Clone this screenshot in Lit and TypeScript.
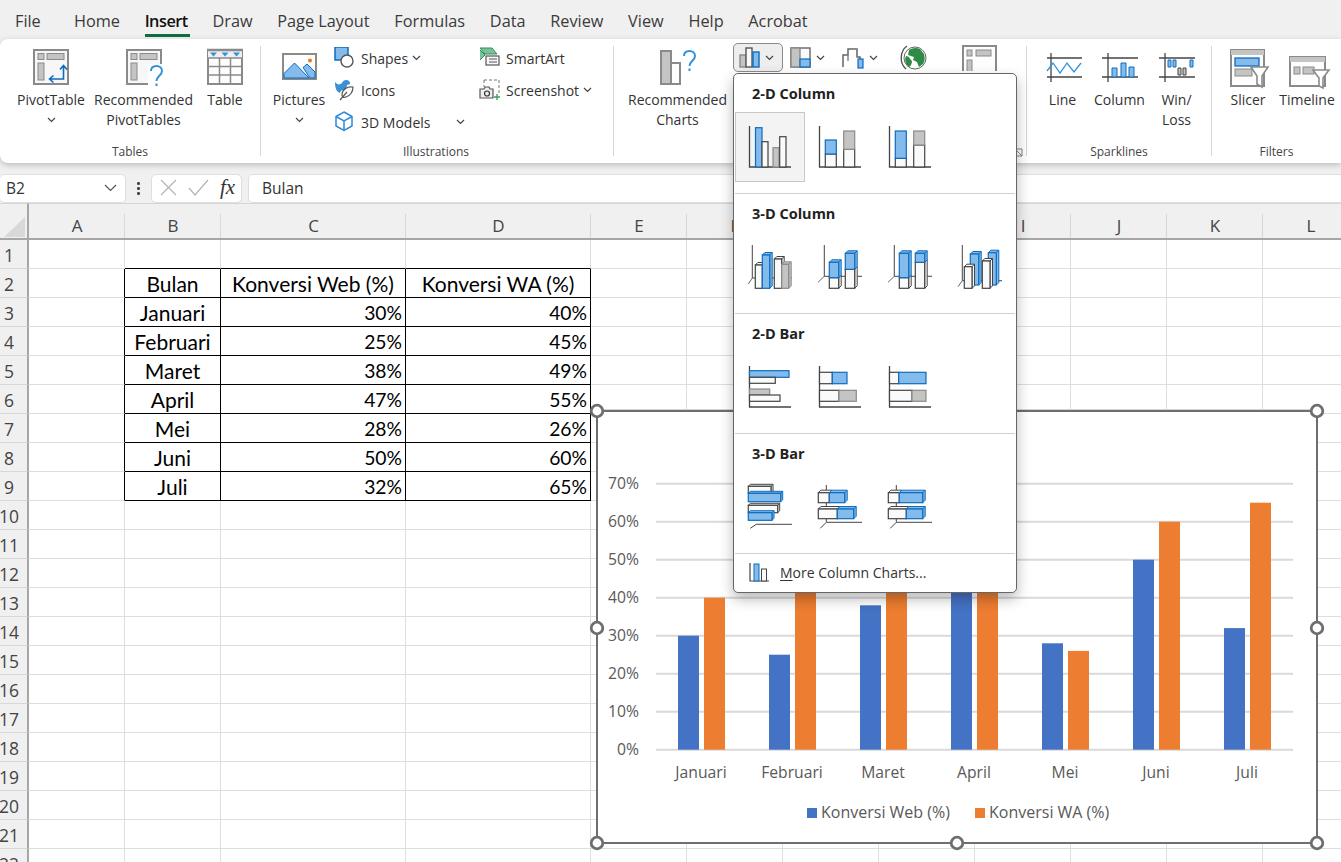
import { LitElement, html, css, svg } from 'lit';
import { customElement } from 'lit/decorators.js';

const BLUE = '#83bbec';
const BLUE_LINE = '#0f6cbd';
const GRAY = '#c4c4c2';
const GRAY_LINE = '#8a8a8a';
const DARK = '#444444';
const PAPER = '#fafafa';

type Kind = 'b' | 'g' | 'w';
const fillOf = { b: BLUE, g: GRAY, w: PAPER };
const lineOf = { b: BLUE_LINE, g: GRAY_LINE, w: DARK };

// flat bar given by its corners
const box = (x0: number, y0: number, x1: number, y1: number, k: Kind) =>
  svg`<rect x=${x0} y=${y0} width=${x1 - x0} height=${y1 - y0} fill=${fillOf[k]} stroke=${lineOf[k]} stroke-width="1.2"/>`;

// same bar, with a top and a side face
const cube = (x0: number, y0: number, x1: number, y1: number, k: Kind, d = 2.5) => svg`
  <path d="M${x0} ${y0}l${d} ${-d}H${x1 + d}V${y1 - d}L${x1} ${y1}V${y0}Z" fill=${fillOf[k]} stroke=${lineOf[k]} stroke-width="1"/>
  <path d="M${x1} ${y0}l${d} ${-d}" stroke=${lineOf[k]} stroke-width="1" fill="none"/>
  ${box(x0, y0, x1, y1, k)}`;

const axes2 = svg`<path d="M14.5 14V55H56" fill="none" stroke=${DARK} stroke-width="1.3"/>`;
const axes3 = (vx: number, fy: number, dx: number) => svg`
  <path d="M${vx} 13V${fy}H57" fill="none" stroke=${DARK} stroke-width="1"/>
  <path d="M${vx} ${fy}L${dx} ${fy + 6}" fill="none" stroke="#666" stroke-width="1"/>`;
const floorH = (fy: number) => svg`
  <path d="M21.3 ${fy}H57M21.3 ${fy}L15.3 56.3" fill="none" stroke=${DARK} stroke-width="1"/>`;

const SECTIONS = [
  {
    title: '2-D Column',
    tiles: [
      svg`${axes2}${box(20.5, 15.7, 27, 55, 'b')}${box(27, 29.7, 33, 55, 'w')}${box(38, 35.7, 44, 55, 'g')}${box(44.7, 24.7, 51, 55, 'w')}`,
      svg`${axes2}${box(20.3, 42, 31.3, 55, 'w')}${box(20.3, 28, 31.3, 42, 'b')}${box(38.7, 37.3, 49.7, 55, 'w')}${box(38.7, 19, 49.7, 37.3, 'g')}`,
      svg`${axes2}${box(20.3, 46.3, 31.3, 55, 'w')}${box(20.3, 19, 31.3, 46.3, 'b')}${box(38.7, 33, 49.7, 55, 'w')}${box(38.7, 19, 49.7, 33, 'g')}`,
    ],
  },
  {
    title: '3-D Column',
    tiles: [
      svg`${axes3(17.3, 46, 13.3)}${cube(20.3, 33, 27.3, 56.3, 'w')}${cube(27.3, 23, 34.7, 56.3, 'b')}${cube(39.3, 27, 46.7, 56.3, 'w')}${cube(46.7, 32.3, 53.7, 56.3, 'g')}`,
      svg`${axes3(19.3, 44.3, 13)}${cube(24.3, 45.7, 33.7, 56.3, 'w')}${cube(24.3, 30.3, 33.7, 45.7, 'b')}${cube(40.3, 37.3, 49.7, 56.3, 'w')}${cube(40.3, 21.3, 49.7, 37.3, 'b')}`,
      svg`${axes3(19.3, 44.3, 13)}${cube(24.3, 45.7, 33.7, 56.3, 'w')}${cube(24.3, 21.3, 33.7, 45.7, 'b')}${cube(40.3, 30.3, 49.7, 56.3, 'w')}${cube(40.3, 21.3, 49.7, 30.3, 'b')}`,
      svg`${axes3(17.3, 48.7, 13)}${cube(25.3, 22, 33.7, 53, 'b')}${cube(43.3, 20.7, 51.3, 53, 'b')}${cube(19.3, 34.7, 27, 56.3, 'w')}${cube(37.3, 29, 45, 56.3, 'w')}`,
    ],
  },
  {
    title: '2-D Bar',
    tiles: [
      svg`${axes2}${box(14.5, 18.7, 54, 25.3, 'b')}${box(14.5, 25.3, 40.3, 31.3, 'w')}${box(14.5, 37, 34.7, 43, 'g')}${box(14.5, 43, 45, 49.3, 'w')}`,
      svg`${axes2}${box(14.5, 20.3, 27.3, 31.7, 'w')}${box(27.3, 20.3, 42, 31.7, 'b')}${box(14.5, 38.3, 34, 49.3, 'w')}${box(34, 38.3, 51.3, 49.3, 'g')}`,
      svg`${axes2}${box(14.5, 20.3, 23.7, 31.7, 'w')}${box(23.7, 20.3, 51, 31.7, 'b')}${box(14.5, 38.3, 37, 49.3, 'w')}${box(37, 38.3, 51, 49.3, 'g')}`,
    ],
  },
  {
    title: '3-D Bar',
    tiles: [
      svg`${floorH(52.3)}${cube(13.3, 14.3, 36, 21.3, 'w', 2)}${cube(13.3, 21.3, 45.7, 29.7, 'b', 2)}${cube(13.3, 33.3, 42.7, 40.7, 'w', 2)}${cube(13.3, 40.7, 37, 48.3, 'b', 2)}`,
      svg`${floorH(50.3)}<path d="M21.3 13V18M21.3 31V35M21.3 47V50" stroke=${DARK} stroke-width="1"/>${cube(13.3, 20.7, 24.3, 30.7, 'w')}${cube(24.3, 20.7, 39.7, 30.7, 'b')}${cube(13.3, 37, 32.3, 46.7, 'w')}${cube(32.3, 37, 48.7, 46.7, 'b')}`,
      svg`${floorH(50.3)}<path d="M21.3 13V18M21.3 31V35M21.3 47V50" stroke=${DARK} stroke-width="1"/>${cube(13.3, 20.7, 24.3, 30.7, 'w')}${cube(24.3, 20.7, 47.7, 30.7, 'b')}${cube(13.3, 37, 31.3, 46.7, 'w')}${cube(31.3, 37, 47.7, 46.7, 'b')}`,
    ],
  },
];

const pivotBase = svg`
  <rect x="7" y="4" width="34" height="34" fill="#f7f7f7" stroke=${GRAY_LINE} stroke-width="2"/>
  <rect x="11" y="7.5" width="6" height="6" fill=${GRAY} stroke=${GRAY_LINE}/>
  <rect x="20" y="7.5" width="17" height="6" fill=${GRAY} stroke=${GRAY_LINE}/>
  <rect x="11" y="17" width="6" height="17" fill=${GRAY} stroke=${GRAY_LINE}/>`;

const question = (x: number, y: number) => svg`
  <g transform="translate(${x} ${y})" fill="none" stroke="#2f93dc" stroke-width="2">
    <path d="M1 6C1 2.5 3.5 1 6.500 1S12 3 12 6c0 4.500-5.500 5-5.500 10"/>
    <path d="M6.500 18.500v2.500"/>
  </g>`;

const ICONS = {
  pivot: svg`${pivotBase}
    <path d="M23 33H36.500V20M33 23.500l3.500-4 3.500 4M26.500 29.500l-4 3.500 4 3.500" fill="none" stroke=${BLUE_LINE} stroke-width="1.600"/>`,
  recPivot: svg`${pivotBase}<rect x="28" y="18" width="16" height="23" fill="#fff"/>${question(30, 19)}`,
  table: svg`
    <rect x="7" y="4" width="34" height="34" fill="#fdfdfd" stroke=${GRAY_LINE} stroke-width="2"/>
    <rect x="7" y="4" width="34" height="8" fill="#efefef"/>
    <path d="M6 4H42" stroke=${GRAY_LINE} stroke-width="2.500"/>
    <path d="M7 12H41M7 20.500H41M7 29H41M18.500 12V38M29.500 12V38" stroke=${GRAY_LINE} stroke-width="1.500"/>
    <path d="M9 6.500h7l-3.500 4zM20.500 6.500h7l-3.500 4zM32 6.500h7l-3.500 4z" fill="#2f93dc"/>`,
  pictures: svg`
    <rect x="8" y="8" width="33" height="25" fill="#fdfdfd" stroke=${GRAY_LINE} stroke-width="2"/>
    <path d="M9 27.500L19.500 17 34 32H9z" fill=${BLUE} stroke=${BLUE_LINE} stroke-width="1"/>
    <path d="M28 21.500l4-3.500 8 8v6h-5z" fill=${BLUE} stroke=${BLUE_LINE} stroke-width="1"/>
    <circle cx="35" cy="14.500" r="2" fill="#e8791f"/>`,
  recChart: svg`
    <rect x="7" y="5" width="10" height="33" fill=${GRAY} stroke=${GRAY_LINE} stroke-width="2"/>
    <rect x="17" y="17" width="9" height="21" fill="#fdfdfd" stroke=${GRAY_LINE} stroke-width="2"/>
    ${question(29, 4)}`,
  sparkLine: svg`
    <path d="M8 12H43M8 31H43M12 7V36" fill="none" stroke=${DARK} stroke-width="1.300"/>
    <path d="M8 25l6-8 7 10 7-10 7 9 7-9" fill="none" stroke="#2f93dc" stroke-width="1.300"/>`,
  sparkCol: svg`
    <path d="M6 12H42M6 31H42M12 7V36" fill="none" stroke=${DARK} stroke-width="1.300"/>
    <path d="M16 22h5v9h-5zM25 17h5v14h-5zM33 21h5v10h-5z" fill=${BLUE} stroke=${BLUE_LINE}/>`,
  sparkWin: svg`
    <path d="M6 12H42M6 31H42M12 7V36" fill="none" stroke=${DARK} stroke-width="1.300"/>
    <path d="M15 14h3v7h-3zM20 14h3v7h-3zM37 14h3v7h-3z" fill=${BLUE} stroke=${BLUE_LINE}/>
    <path d="M25 22h3v7h-3zM30 22h3v7h-3z" fill=${GRAY} stroke=${DARK}/>`,
  slicer: svg`
    <rect x="7" y="4" width="33" height="36" fill="#fdfdfd" stroke=${GRAY_LINE} stroke-width="2"/>
    <rect x="7" y="4" width="33" height="5" fill=${GRAY}/>
    <rect x="11" y="12" width="24" height="8" fill=${BLUE} stroke=${BLUE_LINE} stroke-width="1.300"/>
    <rect x="11" y="23" width="17" height="7" fill=${GRAY} stroke=${GRAY_LINE}/>
    <path d="M27 21H44L38 30V41L33 38V30z" fill="#fff" stroke=${GRAY_LINE} stroke-width="1.600"/>`,
  timeline: svg`
    <rect x="7" y="11" width="35" height="29" fill="#fdfdfd" stroke=${GRAY_LINE} stroke-width="2"/>
    <rect x="7" y="11" width="35" height="5" fill=${GRAY}/>
    <rect x="11" y="21" width="6" height="7" fill=${GRAY} stroke=${GRAY_LINE}/>
    <rect x="20" y="21" width="11" height="7" fill=${GRAY} stroke=${GRAY_LINE}/>
    <path d="M30 24H46L40 32V42L36 40V32z" fill="#fff" stroke=${GRAY_LINE} stroke-width="1.600"/>`,
};

const chev = (w = 9) => html`<svg class="chev" width=${w} height="6" viewBox="0 0 9 6"><path d="M1 1l3.500 3.500L8 1" fill="none" stroke="#444" stroke-width="1.200"/></svg>`;

const SMALL = {
  shapes: svg`
    <rect x="1" y="0" width="13" height="13" fill=${BLUE} stroke=${BLUE_LINE} stroke-width="1.500"/>
    <circle cx="13" cy="14" r="6" fill="#fff" stroke="#555" stroke-width="1.400"/>`,
  icons: svg`
    <path d="M1 3c2 3 5 3 7 1 1-3 5-4 7-2 1 1 1 2 1 3l-3 1c0 3-2 5-5 5-1 1-2 2-2 3-3-1-5-4-5-11z" fill="#3a8fd6"/>
    <path d="M19 8c-5-1-11 2-11 8 0 2 2 3 4 2 4-1 7-5 7-10zM6 21l7-8" fill="#fff" stroke="#555" stroke-width="1.200"/>`,
  models: svg`
    <path d="M10 1l8 4.500v9.500l-8 4.500-8-4.500V5.500zM2 5.500l8 4.500 8-4.500M10 10v9.500" fill="none" stroke="#2f8bd8" stroke-width="1.500"/>`,
  smartart: svg`
    <path d="M1 1h12l5 6H6zM1 13l5-5-5-5" fill="#79c29a" stroke="#2f8f5b"/>
    <rect x="7" y="9" width="13" height="9" fill="#f8f8f8" stroke="#555" stroke-width="1.200"/>
    <path d="M10 12h8M10 15h8" stroke="#555"/>`,
  screenshot: svg`
    <path d="M5 1h15v15" fill="none" stroke="#777" stroke-dasharray="3 2"/>
    <path d="M5 1v7" fill="none" stroke="#777" stroke-dasharray="3 2"/>
    <path d="M1 10h4l1-2h4l1 2h3v9H1z" fill="#eee" stroke="#555" stroke-width="1.200"/>
    <circle cx="8" cy="14.500" r="2.500" fill="none" stroke="#333" stroke-width="1.200"/>
    <path d="M18 15v6M15 18h6" stroke="#3aa35f" stroke-width="1.400"/>`,
  column: svg`
    <rect x="2" y="8" width="6" height="12" fill=${GRAY} stroke=${GRAY_LINE} stroke-width="1.400"/>
    <rect x="8" y="1" width="6" height="19" fill="#fafafa" stroke="#555" stroke-width="1.400"/>
    <rect x="15" y="5" width="6" height="15" fill=${BLUE} stroke=${BLUE_LINE} stroke-width="1.400"/>`,
  hierarchy: svg`
    <rect x="1" y="1" width="19" height="19" fill="#fafafa" stroke="#666" stroke-width="1.400"/>
    <rect x="1" y="1" width="9" height="19" fill=${GRAY} stroke=${GRAY_LINE} stroke-width="1.400"/>
    <rect x="10" y="12" width="10" height="8" fill=${BLUE} stroke=${BLUE_LINE} stroke-width="1.200"/>`,
  waterfall: svg`
    <path d="M1 20V8h5V2h9v8h3v10" fill="none" stroke="#666" stroke-width="1.500"/>
    <path d="M6 8v6M15 2v8" fill="none" stroke="#888" stroke-width="1.500"/>
    <rect x="16" y="12" width="5" height="9" fill=${BLUE} stroke=${BLUE_LINE} stroke-width="1.200"/>`,
  globe: svg`
    <circle cx="15" cy="14" r="11" fill="#fff" stroke="#666" stroke-width="1"/>
    <path d="M9 6c3-2 7-3 11-1l4 5c1 4 1 7-1 10l-4 3-2-5-4-2 1-3-6-2z" fill="#2e8b45"/>
    <path d="M6 12c3 0 4 3 6 5 0 2-1 5-3 6-3-2-5-7-3-11z" fill="#2e8b45"/>
    <path d="M7 2C0 7-1 19 6 25" fill="none" stroke="#555" stroke-width="1.400"/>`,
  pivotChart: svg`
    <rect x="1" y="1" width="33" height="30" fill="#fdfdfd" stroke=${GRAY_LINE} stroke-width="2"/>
    <rect x="5" y="5" width="5" height="6" fill=${GRAY} stroke=${GRAY_LINE}/>
    <rect x="14" y="5" width="15" height="6" fill=${GRAY} stroke=${GRAY_LINE}/>
    <rect x="5" y="15" width="5" height="16" fill=${GRAY} stroke=${GRAY_LINE}/>`,
};

const COLUMNS = ['A', 'B', 'C', 'D', 'E', 'F', 'G', 'H', 'I', 'J', 'K', 'L'];
const TABLE = [
  ['Bulan', 'Konversi Web (%)', 'Konversi WA (%)'],
  ['Januari', '30%', '40%'],
  ['Februari', '25%', '45%'],
  ['Maret', '38%', '49%'],
  ['April', '47%', '55%'],
  ['Mei', '28%', '26%'],
  ['Juni', '50%', '60%'],
  ['Juli', '32%', '65%'],
];

const TABS = ['File', 'Home', 'Insert', 'Draw', 'Page Layout', 'Formulas', 'Data', 'Review', 'View', 'Help', 'Acrobat'];

@customElement('sheet-chart')
export class SheetChart extends LitElement {
  static styles = css`
    :host { display: block; position: absolute; left: 597px; top: 208px; width: 720px; height: 432px; }
    svg { display: block; overflow: visible; font-family: "Open Sans", sans-serif; font-size: 15.7px; fill: #595959; }
    .grid { stroke: #d9d9d9; stroke-width: 2; }
    .legend { font-size: 16px; }
  `;

  render() {
    const x0 = 59, base = 338.7, step = 38, cat = 91;
    const rows = TABLE.slice(1);
    const handles = [[0, 0], [360, 0], [720, 0], [0, 217], [720, 217], [0, 432], [360, 432], [720, 432]];
    return html`<svg width="720" height="432" viewBox="0 0 720 432">
      <rect x="-1" y="-2" width="722" height="2" fill="#d4d4d4"/>
      <rect width="720" height="432" fill="#fff" stroke="#6e6e6e" stroke-width="2"/>
      ${[0, 1, 2, 3, 4, 5, 6, 7].map((i) => svg`
        <line class="grid" x1=${x0} x2="696" y1=${base - i * step} y2=${base - i * step}/>
        <text x="42" y=${base - i * step + 5} text-anchor="end">${i * 10}%</text>`)}
      ${rows.map((r, i) => {
        const web = parseInt(r[1]) * 3.8, wa = parseInt(r[2]) * 3.8;
        return svg`
          <rect x=${81 + i * cat} y=${base - web} width="21" height=${web} fill="#4472c4"/>
          <rect x=${107 + i * cat} y=${base - wa} width="21" height=${wa} fill="#ed7d31"/>
          <text x=${104 + i * cat} y="367" text-anchor="middle">${r[0]}</text>`;
      })}
      <rect x="210" y="397" width="10" height="10" fill="#4472c4"/>
      <text class="legend" x="224" y="407">Konversi Web (%)</text>
      <rect x="378" y="397" width="10" height="10" fill="#ed7d31"/>
      <text class="legend" x="392" y="407">Konversi WA (%)</text>
      ${handles.map(([x, y]) => svg`<circle cx=${x} cy=${y} r="5.800" fill="#fff" stroke="#6e6e6e" stroke-width="2.800"/>`)}
    </svg>`;
  }
}

@customElement('chart-menu')
export class ChartMenu extends LitElement {
  static styles = css`
    :host {
      display: block; position: absolute; left: 733px; top: 73px; width: 284px; height: 520px; box-sizing: border-box;
      background: #fff; border: 1px solid #666; border-radius: 5px;
      box-shadow: 0 6px 14px rgba(0, 0, 0, .28);
      font-family: "Open Sans", sans-serif; color: #222;
    }
    section { height: 120px; box-sizing: border-box; border-bottom: 1px solid #d0d0d0; margin: 0 1px; }
    h3 { margin: 0; height: 38px; padding: 11px 0 0 17px; box-sizing: border-box; font-size: 14.500px; line-height: 18px; font-weight: 700; color: #222; }
    .tiles { display: flex; }
    .tile { width: 70px; height: 70px; box-sizing: border-box; }
    .tile svg { display: block; }
    .tile.on { background: #f3f3f3; outline: 1px solid #c8c8c8; outline-offset: -1px; }
    .more { display: flex; align-items: center; height: 36px; padding-left: 15px; font-size: 14px; gap: 11px; color: #333; }
    .more u { text-underline-offset: 2px; }
  `;

  render() {
    return html`
      ${SECTIONS.map((s, si) => html`<section>
        <h3>${s.title}</h3>
        <div class="tiles">
          ${s.tiles.map((t, ti) => html`<div class=${si === 0 && ti === 0 ? 'tile on' : 'tile'}>
            <svg width="70" height="70" viewBox="0 0 70 70">${t}</svg>
          </div>`)}
        </div>
      </section>`)}
      <div class="more">
        <svg width="20" height="20" viewBox="0 0 20 20">
          <path d="M1 1V19H20" fill="none" stroke=${DARK} stroke-width="1.200"/>
          <rect x="5" y="2" width="5" height="17" fill=${BLUE} stroke=${BLUE_LINE}/>
          <rect x="12.500" y="7" width="5" height="12" fill=${PAPER} stroke=${DARK}/>
        </svg>
        <span><u>M</u>ore Column Charts...</span>
      </div>
    `;
  }
}

@customElement('app-root')
export class AppRoot extends LitElement {
  static styles = css`
    :host {
      display: block; position: relative; width: 1341px; height: 862px; overflow: hidden;
      background: #f0f0f0; font-family: "Open Sans", sans-serif; color: #333;
    }
    .tabs { display: flex; height: 39px; gap: 24.700px; padding-left: 15px; font-size: 16.300px; line-height: 42px; color: #3a3a3a; }
    .tabs span:first-child { margin-right: 8.500px; }
    .tabs .on { position: relative; color: #111; font-weight: 600; letter-spacing: -.5px; }
    .tabs .on::after { content: ""; position: absolute; left: 0; right: -2px; top: 34px; height: 2.500px; background: #0f6c3f; }

    .ribbon {
      display: flex; height: 124px; box-sizing: border-box; padding: 7px 0; background: #fff;
      border-radius: 8px 0 0 8px; box-shadow: 0 2px 6px rgba(0, 0, 0, .22); font-size: 14px;
    }
    .group { display: flex; flex-direction: column; box-sizing: border-box; border-right: 1px solid #d6d6d6; }
    .g-tables { width: 261px; }
    .g-illus { width: 353px; }
    .g-charts { width: 413px; }
    .g-spark { width: 185px; }
    .g-filters { width: 129px; border-right: 0; }
    .items { flex: 1; display: flex; }
    .caption { text-align: center; font-size: 12px; line-height: 16px; height: 16px; margin-top: 2px; margin-bottom: -4px; color: #444; }
    .g-illus .caption { padding-right: 2px; }
    .g-tables .items { padding-left: 9px; }
    .g-illus .items { padding-left: 10px; }
    .g-charts .items { padding-left: 13px; }
    .g-spark .items { padding-left: 7px; }
    .g-filters .items { padding-left: 8px; }

    .big { display: flex; flex-direction: column; align-items: center; text-align: center; line-height: 20px; white-space: nowrap; }
    .big svg.icon { display: block; margin-bottom: 0; flex: none; }
    .big .chev { margin-top: 7px; }
    .w56 { width: 56px; } .w57 { width: 57px; } .w62 { width: 62px; }
    .w84 { width: 84px; } .w101 { width: 101px; }

    .stack { display: flex; flex-direction: column; gap: 6px; margin-top: -1px; }
    .s1 { margin-left: 7px; width: 145px; }
    .s2 { width: 120px; }
    .row { display: flex; align-items: center; height: 26px; gap: 6px; white-space: nowrap; }
    .row svg { flex: none; }
    .row .more { margin-left: -2px; display: flex; }
    .row .push { margin-left: 20px; }

    .minis { display: flex; align-items: flex-start; margin-left: 5px; margin-top: -3px; height: 30px; }
    .mini { display: flex; align-items: center; gap: 5px; height: 29px; box-sizing: border-box; }
    .mini.on { width: 50px; padding-left: 4px; background: #eeeeee; border: 1px solid #8a8a8a; border-radius: 5px; margin-right: 7px; }
    .mini.two { width: 52px; }
    .mini.three { width: 58px; }
    .mini.globe { width: 62px; }

    .launcher { position: absolute; left: 1017px; top: 148px; }

    .formula { display: flex; height: 29px; margin-top: 11px; font-size: 15.500px; color: #333; }
    .fbox { background: #fff; border: 1px solid #dedede; border-radius: 5px; box-sizing: border-box; display: flex; align-items: center; padding-bottom: 2px; }
    .name { width: 126px; justify-content: space-between; padding: 0 8px 2px 6px; border-left: 0; }
    .dots { width: 25px; display: flex; flex-direction: column; align-items: center; justify-content: center; gap: 2.500px; }
    .dots i { width: 2.500px; height: 2.500px; background: #444; border-radius: 50%; }
    .fx { width: 91px; gap: 11px; padding-left: 8px; margin-right: 6px; }
    .fx em { font: italic 400 21px "Liberation Serif", serif; color: #333; }
    .value { flex: 1; padding-left: 13px; margin-right: -10px; }

    .sheet {
      display: grid; grid-template-columns: 29px 96px 96px 185px 185px repeat(8, 96px);
      grid-template-rows: 37px repeat(22, 29px); height: 659px; overflow: hidden; position: relative;
    }
    .cell { border-right: 1px solid #dedede; border-bottom: 1px solid #dedede; background: #fff; box-sizing: border-box;
      font-family: Lato, sans-serif; font-size: 21px; line-height: 29px; color: #000; white-space: nowrap; padding: 0 3px; }
    .center { text-align: center; }
    .right { text-align: right; font-size: 19.300px; }
    .inkR { border-right-color: #000; }
    .inkB { border-bottom-color: #000; }
    .corner, .colhead { background: #f0f0f0; border-bottom: 2px solid #a6a6a6; border-top: 1px solid #d6d6d6; box-sizing: border-box; }
    .corner { border-right: 2px solid #a6a6a6; }
    .corner svg { display: block; }
    .colhead { position: relative; text-align: center; font-size: 17px; line-height: 24px; padding-top: 10px; color: #444; }
    .colhead::after { content: ""; position: absolute; right: 0; top: 10px; bottom: 0; width: 1px; background: #d8d8d8; }
    .rowhead { background: #f0f0f0; border-right: 2px solid #a6a6a6; border-bottom: 1px solid #d8d8d8; box-sizing: border-box; display: flex;
      justify-content: center; width: 29px; padding-right: 9px; font-size: 17.500px; line-height: 31px; color: #444; }
  `;

  private big(icon: unknown, width: string, lines: string[], more = false) {
    return html`<div class="big ${width}">
      <svg class="icon" width="48" height="44" viewBox="0 0 48 44">${icon}</svg>
      ${lines.map((l) => html`<span>${l}</span>`)}
      ${more ? chev() : ''}
    </div>`;
  }

  private small(icon: unknown, label: string, more = false, push = false) {
    return html`<div class="row">
      <svg width="21" height="22" viewBox="0 0 21 22">${icon}</svg>
      <span>${label}</span>
      ${more ? html`<span class="more ${push ? 'push' : ''}">${chev()}</span>` : ''}
    </div>`;
  }

  private ink(r: number, c: number) {
    const inRow = r >= 2 && r <= 9, inCol = c >= 1 && c <= 3;
    const right = inRow && (inCol || c === 0);
    const bottom = inCol && (inRow || r === 1);
    return `${right ? 'inkR' : ''} ${bottom ? 'inkB' : ''}`;
  }

  private cell(r: number, c: number) {
    const row = r >= 2 && r <= 9 && c >= 1 && c <= 3 ? TABLE[r - 2] : null;
    const text = row ? row[c - 1] : '';
    const align = c === 1 || r === 2 ? 'center' : 'right';
    return html`<div class="cell ${align} ${this.ink(r, c)}">${text}</div>`;
  }

  render() {
    const rows = Array.from({ length: 22 }, (_, i) => i + 1);
    return html`
      <nav class="tabs">
        ${TABS.map((t) => html`<span class=${t === 'Insert' ? 'on' : ''}>${t}</span>`)}
      </nav>

      <div class="ribbon">
        <div class="group g-tables">
          <div class="items">
            ${this.big(ICONS.pivot, 'w84', ['PivotTable'], true)}
            ${this.big(ICONS.recPivot, 'w101', ['Recommended', 'PivotTables'])}
            ${this.big(ICONS.table, 'w62', ['Table'])}
          </div>
          <div class="caption">Tables</div>
        </div>
        <div class="group g-illus">
          <div class="items">
            ${this.big(ICONS.pictures, 'w56', ['Pictures'], true)}
            <div class="stack s1">
              ${this.small(SMALL.shapes, 'Shapes', true)}
              ${this.small(SMALL.icons, 'Icons')}
              ${this.small(SMALL.models, '3D Models', true, true)}
            </div>
            <div class="stack s2">
              ${this.small(SMALL.smartart, 'SmartArt')}
              ${this.small(SMALL.screenshot, 'Screenshot', true)}
            </div>
          </div>
          <div class="caption">Illustrations</div>
        </div>
        <div class="group g-charts">
          <div class="items">
            ${this.big(ICONS.recChart, 'w101', ['Recommended', 'Charts'])}
            <div class="minis">
              <div class="mini on"><svg width="22" height="22" viewBox="0 0 22 22">${SMALL.column}</svg>${chev()}</div>
              <div class="mini two"><svg width="21" height="22" viewBox="0 0 21 22">${SMALL.hierarchy}</svg>${chev()}</div>
              <div class="mini three"><svg width="22" height="22" viewBox="0 0 22 22">${SMALL.waterfall}</svg>${chev()}</div>
              <div class="mini globe"><svg width="30" height="28" viewBox="0 0 30 28">${SMALL.globe}</svg></div>
              <div class="mini"><svg width="36" height="26" viewBox="0 0 36 26">${SMALL.pivotChart}</svg></div>
            </div>
          </div>
          <div class="caption">&nbsp;</div>
        </div>
        <div class="group g-spark">
          <div class="items">
            ${this.big(ICONS.sparkLine, 'w57', ['Line'])}
            ${this.big(ICONS.sparkCol, 'w57', ['Column'])}
            ${this.big(ICONS.sparkWin, 'w57', ['Win/', 'Loss'])}
          </div>
          <div class="caption">Sparklines</div>
        </div>
        <div class="group g-filters">
          <div class="items">
            ${this.big(ICONS.slicer, 'w56', ['Slicer'])}
            ${this.big(ICONS.timeline, 'w62', ['Timeline'])}
          </div>
          <div class="caption">Filters</div>
        </div>
      </div>

      <div class="formula">
        <div class="fbox name"><span>B2</span>
          <svg width="13" height="8" viewBox="0 0 13 8"><path d="M1 1l5.500 5.500L12 1" fill="none" stroke="#555" stroke-width="1.200"/></svg>
        </div>
        <div class="dots"><i></i><i></i><i></i></div>
        <div class="fbox fx">
          <svg width="17" height="17" viewBox="0 0 17 17"><path d="M1 1l15 15M16 1L1 16" stroke="#b4b4b4" stroke-width="1.200"/></svg>
          <svg width="21" height="17" viewBox="0 0 21 17"><path d="M1 9l6 7L20 1" fill="none" stroke="#b4b4b4" stroke-width="1.200"/></svg>
          <em>fx</em>
        </div>
        <div class="fbox value">Bulan</div>
      </div>

      <div class="sheet">
        <div class="corner"><svg width="27" height="34" viewBox="0 0 27 34"><path d="M25 13V33H4z" fill="#d8d8d8"/></svg></div>
        ${COLUMNS.map((c) => html`<div class="colhead">${c}</div>`)}
        ${rows.map((r) => html`
          <div class="rowhead">${r}</div>
          ${COLUMNS.map((_, c) => this.cell(r, c))}
        `)}
        <sheet-chart></sheet-chart>
      </div>

      <chart-menu></chart-menu>
      <svg class="launcher" width="6" height="9" viewBox="0 0 6 9"><path d="M0 1h5v7M0 8h5L0 3" fill="none" stroke="#777"/></svg>
    `;
  }
}
